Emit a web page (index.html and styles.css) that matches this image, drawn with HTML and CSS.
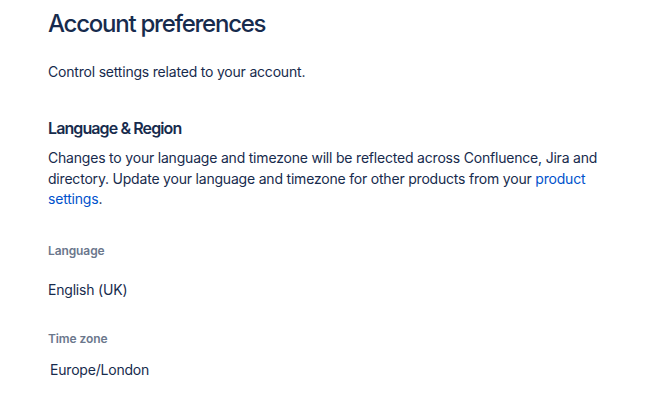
FILE: index.html
```html
<!DOCTYPE html>
<html>
<head>
<meta charset="utf-8">
<link rel="stylesheet" href="styles.css">
</head>
<body>
<main class="page">
  <h1 class="title">Account preferences</h1>
  <p class="intro">Control settings related to your account.</p>
  <h2 class="section-title">Language &amp; Region</h2>
  <p class="desc">Changes to your language and timezone will be reflected across Confluence, Jira and directory. Update your language and timezone for other products from your <a class="link" href="#">product settings</a>.</p>
  <div class="field">
    <div class="label">Language</div>
    <div class="value">English (UK)</div>
  </div>
  <div class="field field-tz">
    <div class="label">Time zone</div>
    <div class="value value-tz">Europe/London</div>
  </div>
</main>
</body>
</html>
```
FILE: styles.css
```css
html, body {
  margin: 0;
  padding: 0;
  background: #ffffff;
}
body {
  font-family: Inter, "Noto Sans", sans-serif;
  color: #172B4D;
  letter-spacing: -0.2px;
}
.page {
  padding: 10px 0 0 48px;
  width: 556px;
}
.title {
  margin: 0;
  font-size: 24px;
  line-height: 28px;
  font-weight: 500;
  letter-spacing: -1.25px;
}
.intro {
  margin: 24px 0 0;
  font-size: 14px;
  line-height: 20px;
}
.section-title {
  margin: 36px 0 0;
  font-size: 16px;
  line-height: 20px;
  font-weight: 600;
  letter-spacing: -0.9px;
}
.desc {
  margin: 10px 0 0;
  font-size: 14px;
  line-height: 20.5px;
}
.link {
  color: #0052CC;
  text-decoration: none;
}
.field {
  margin-top: 33px;
}
.label {
  font-size: 12px;
  line-height: 16px;
  font-weight: 600;
  color: #6B778C;
  letter-spacing: -0.1px;
}
.value {
  margin-top: 21px;
  font-size: 14px;
  line-height: 20px;
}
.field-tz {
  margin-top: 31px;
}
.value-tz {
  margin-top: 13px;
  padding-left: 2px;
}
```
